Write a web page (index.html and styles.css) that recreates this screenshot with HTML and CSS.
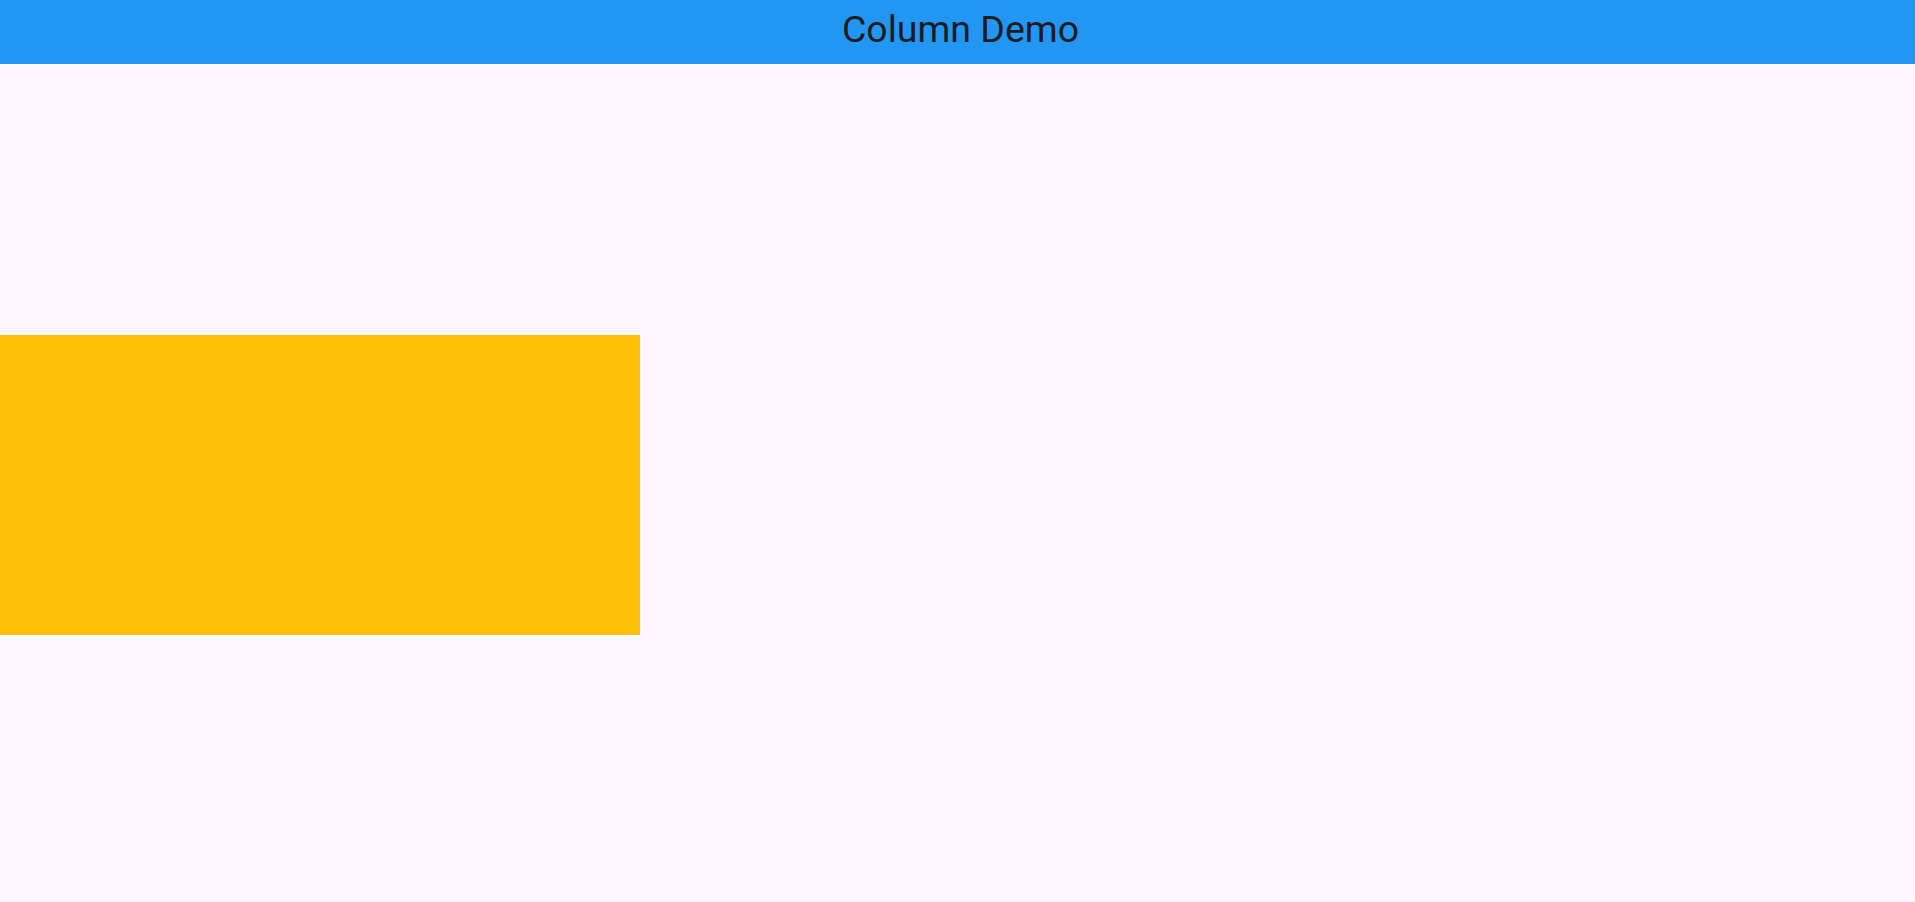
FILE: index.html
```html
<!DOCTYPE html>
<html>
<head>
<meta charset="utf-8">
<link rel="stylesheet" href="styles.css">
</head>
<body>
<header class="appbar"><h1 class="title">Column Demo</h1></header>
<main class="content">
  <div class="box"></div>
</main>
</body>
</html>
```
FILE: styles.css
```css
html, body { margin: 0; padding: 0; }
body {
  background: #fef7ff;
  font-family: Roboto, "Noto Sans", sans-serif;
  height: 902px;
  display: flex;
  flex-direction: column;
  overflow: hidden;
}
.appbar {
  height: 64px;
  background: #2196f3;
  display: flex;
  align-items: center;
  justify-content: center;
  flex-shrink: 0;
}
.title {
  margin: 0 0 6px 6px;
  font-size: 37.5px;
  font-weight: 400;
  color: #1d1b20;
  line-height: 44px;
}
.content {
  flex: 1;
  display: flex;
  flex-direction: column;
  justify-content: center;
  padding-top: 4px;
}
.box {
  width: 640px;
  height: 300px;
  background: #ffc107;
}
```
